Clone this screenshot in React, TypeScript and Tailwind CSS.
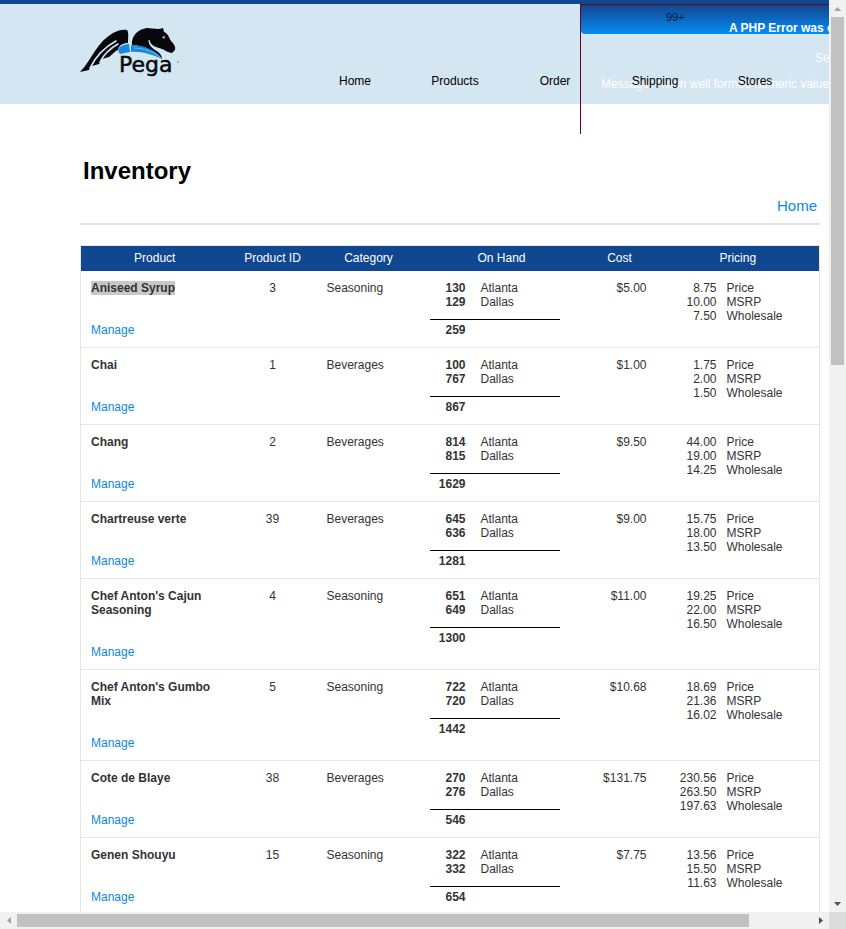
import React from "react";

type Product = {
  name: string;
  id: number;
  category: string;
  stock: [number, number];
  cost: string;
  prices: [string, string, string];
  selected?: boolean;
};

const products: Product[] = [
  { name: "Aniseed Syrup", id: 3, category: "Seasoning", stock: [130, 129], cost: "$5.00", prices: ["8.75", "10.00", "7.50"], selected: true },
  { name: "Chai", id: 1, category: "Beverages", stock: [100, 767], cost: "$1.00", prices: ["1.75", "2.00", "1.50"] },
  { name: "Chang", id: 2, category: "Beverages", stock: [814, 815], cost: "$9.50", prices: ["44.00", "19.00", "14.25"] },
  { name: "Chartreuse verte", id: 39, category: "Beverages", stock: [645, 636], cost: "$9.00", prices: ["15.75", "18.00", "13.50"] },
  { name: "Chef Anton's Cajun Seasoning", id: 4, category: "Seasoning", stock: [651, 649], cost: "$11.00", prices: ["19.25", "22.00", "16.50"] },
  { name: "Chef Anton's Gumbo Mix", id: 5, category: "Seasoning", stock: [722, 720], cost: "$10.68", prices: ["18.69", "21.36", "16.02"] },
  { name: "Cote de Blaye", id: 38, category: "Beverages", stock: [270, 276], cost: "$131.75", prices: ["230.56", "263.50", "197.63"] },
  { name: "Genen Shouyu", id: 15, category: "Seasoning", stock: [322, 332], cost: "$7.75", prices: ["13.56", "15.50", "11.63"] },
];

const navItems = ["Home", "Products", "Order", "Shipping", "Stores"];
const warehouses = ["Atlanta", "Dallas"];
const priceLabels = ["Price", "MSRP", "Wholesale"];

function Logo() {
  return (
    <svg width="102" height="56" viewBox="0 0 102 56" role="img" aria-label="Pega">
      <path d="M0 48C6 42 10 34 15 27C20 19 26 13 33 9C38 6 44 5 47 6C49 8 48 15 48 19C43 19 39 21 38 26C35 27 33 30 29 33L22 35C23 31 25 29 27 27C23 31 22 37 19 40L12 42C13 39 15 37 16 34C13 37 11 42 9 46Z" fill="#08080c" />
      <path d="M10 44C16 32 23 24 36 17M20 38C24 30 29 25 38 20" fill="none" stroke="#d4e6f2" strokeWidth="1.6" strokeLinecap="round" />
      <path d="M52 21C51 12 58 5 67 4C73 4 78 6 83 4L84 8C88 9 89 14 91 17C94 20 96 23 95 26L92 29C88 29 84 25 79 24C75 23 71 21 70 17C70 21 72 24 75 26C79 28 82 31 82 35C75 27 65 22 52 21Z" fill="#08080c" />
      <path d="M69 16C69 21 73 25 79 26" fill="none" stroke="#d4e6f2" strokeWidth="1.2" />
      <path d="M82 13L85 12L84 15Z" fill="#d4e6f2" />
      <path d="M39 24C42 21 46 20 49 20L50 28L40 30C38 28 38 26 39 24Z" fill="#1688df" />
      <path d="M51 21C64 21 76 26 82 35C73 31 61 27 51 28Z" fill="#1688df" />
      <path d="M54 24C64 24 74 28 81 34" fill="none" stroke="#74b9f0" strokeWidth="1" />
      <text x="39" y="48" fontFamily="DejaVu Sans, sans-serif" fontSize="22" fill="#08080c" stroke="#08080c" strokeWidth="0.5">Pega</text>
      <circle cx="98" cy="38" r="1" fill="#8f9ca5" />
    </svg>
  );
}

function ErrorNotice() {
  return (
    <div className="absolute left-[580px] top-1 h-[130px] w-[320px] border-l border-t border-[#6e0018] text-xs text-white">
      <div className="h-[29px] rounded-bl bg-linear-to-b from-[#0f4790] to-[#008df5] pl-[148px] pt-[15px] font-bold whitespace-nowrap">
        A PHP Error was encountered
      </div>
      <p className="pl-[234px] pt-4 whitespace-nowrap">Severity: Notice</p>
      <p className="pl-5 pt-[10px] whitespace-nowrap">Message: A non well formed numeric value encountered</p>
    </div>
  );
}

function Header() {
  return (
    <header className="relative h-[104px] border-t-4 border-[#0f4790] bg-[#d4e6f2]">
      <div className="absolute left-0 -top-1">
        <ErrorNotice />
      </div>
      <div className="mx-auto flex w-[740px]">
        <a href="#home" className="mt-5 block h-14 w-[102px]">
          <Logo />
        </a>
        <nav className="relative ml-[123px] pt-[69px]">
          <ul className="flex">
            {navItems.map((item) => (
              <li key={item} className="w-[100px] text-center text-xs text-black">
                <a href={`#${item.toLowerCase()}`}>{item}</a>
              </li>
            ))}
          </ul>
          <span className="absolute left-[361px] top-[5px] text-[11px] leading-4 text-[#0b1a33]">99+</span>
        </nav>
      </div>
    </header>
  );
}

function ProductRow({ product }: { product: Product }) {
  const total = product.stock[0] + product.stock[1];
  return (
    <tr className="border-b border-[#e6e6e6] align-top">
      <td className="p-[10px]">
        <div className="mb-7 font-bold">
          <span className={product.selected ? "bg-[#c8c8c8]" : ""}>{product.name}</span>
        </div>
        <a href={`#manage-${product.id}`} className="block text-[#0b88e6]">Manage</a>
      </td>
      <td className="p-[10px] text-center">{product.id}</td>
      <td className="p-[10px]">{product.category}</td>
      <td className="p-[10px]">
        <div className="-ml-px w-[130px]">
          {warehouses.map((city, i) => (
            <div key={city} className="flex gap-[15px]">
              <b className="w-9 text-right">{product.stock[i]}</b>
              <span>{city}</span>
            </div>
          ))}
          <div className="mt-[10px] border-t border-black pt-[3px]">
            <b className="block w-9 text-right">{total}</b>
          </div>
        </div>
      </td>
      <td className="p-[10px] text-right">{product.cost}</td>
      <td className="p-[10px]">
        {priceLabels.map((label, i) => (
          <div key={label} className="flex gap-[10px]">
            <span className="w-[50px] text-right">{product.prices[i]}</span>
            <span>{label}</span>
          </div>
        ))}
      </td>
    </tr>
  );
}

function InventoryTable() {
  return (
    <table className="mt-5 w-full table-fixed border-collapse border border-[#e6e6e6] text-xs leading-[14px] text-[#333]">
      <colgroup>
        <col className="w-[148px]" />
        <col className="w-[88px]" />
        <col className="w-[104px]" />
        <col className="w-[162px]" />
        <col className="w-[74px]" />
        <col />
      </colgroup>
      <thead>
        <tr className="h-[25px] bg-[#0f4790] text-white">
          {["Product", "Product ID", "Category", "On Hand", "Cost", "Pricing"].map((title) => (
            <th key={title} scope="col" className="p-0 text-center font-normal">{title}</th>
          ))}
        </tr>
      </thead>
      <tbody>
        {products.map((product) => (
          <ProductRow key={product.id} product={product} />
        ))}
      </tbody>
    </table>
  );
}

function VerticalScrollbar() {
  return (
    <div aria-hidden="true" className="flex flex-col items-center bg-[#f1f1f1]">
      <div className="flex h-[17px] items-center">
        <svg width="7" height="4" viewBox="0 0 7 4"><path d="M0 4L3.5 0L7 4Z" fill="#a3a3a3" /></svg>
      </div>
      <div className="h-[348px] w-[13px] bg-[#c1c1c1]" />
      <div className="mt-auto flex h-[17px] items-center">
        <svg width="7" height="4" viewBox="0 0 7 4"><path d="M0 0L3.5 4L7 0Z" fill="#505050" /></svg>
      </div>
    </div>
  );
}

function HorizontalScrollbar() {
  return (
    <div aria-hidden="true" className="flex items-center bg-[#f1f1f1]">
      <div className="flex w-[17px] justify-center">
        <svg width="4" height="7" viewBox="0 0 4 7"><path d="M4 0L0 3.5L4 7Z" fill="#a3a3a3" /></svg>
      </div>
      <div className="h-[13px] w-[732px] bg-[#c1c1c1]" />
      <div className="ml-auto flex w-[17px] justify-center">
        <svg width="4" height="7" viewBox="0 0 4 7"><path d="M0 0L4 3.5L0 7Z" fill="#505050" /></svg>
      </div>
    </div>
  );
}

export default function App() {
  return (
    <div className="grid h-screen grid-cols-[minmax(0,1fr)_17px] grid-rows-[minmax(0,1fr)_17px] bg-white font-['Liberation_Sans',Arial,sans-serif]">
      <div className="overflow-hidden">
        <div className="min-w-[900px]">
          <Header />
          <main className="mx-auto w-[740px]">
            <h1 className="pl-[3px] pt-[51px] text-2xl leading-8 font-bold text-black">Inventory</h1>
            <div className="border-b-2 border-[#e3e3e3] pt-[9px] pb-[7px] pr-[3px] text-right text-[15px] leading-5">
              <a href="#home" className="text-[#0b88e6]">Home</a>
            </div>
            <InventoryTable />
          </main>
        </div>
      </div>
      <VerticalScrollbar />
      <HorizontalScrollbar />
      <div className="bg-[#dcdcdc]" />
    </div>
  );
}
